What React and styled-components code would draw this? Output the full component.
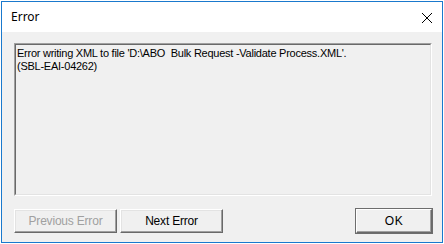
import React from "react";
import styled, { createGlobalStyle } from "styled-components";

const GlobalStyle = createGlobalStyle`
  html, body {
    margin: 0;
    padding: 0;
    background: #ffffff;
  }
  body {
    width: 444px;
    height: 244px;
    overflow: hidden;
  }
`;

const Desk = styled.div`
  padding: 1px 0 0 1px;
  width: 444px;
  height: 244px;
  box-sizing: border-box;
`;

const Window = styled.div`
  width: 442px;
  height: 242px;
  box-sizing: border-box;
  border: 1px solid #1a79cd;
  background: #f0f0f0;
  display: flex;
  flex-direction: column;
`;

const TitleBar = styled.div`
  height: 30px;
  background: #ffffff;
  display: flex;
  align-items: center;
  justify-content: space-between;
  padding: 0 9px 0 9px;
  font-family: "Noto Sans", "Liberation Sans", sans-serif;
  font-size: 12px;
  color: #000;
`;

const Title = styled.span`
  margin-top: -1px;
`;

const Close = styled.div`
  width: 12px;
  height: 12px;
  display: flex;
  margin-top: 1px;
`;

const Body = styled.div`
  flex: 1;
  display: flex;
  flex-direction: column;
  padding: 11px 10px 9px 12px;
`;

const MessageBox = styled.div`
  height: 153px;
  border-style: solid;
  border-width: 1px;
  border-color: #a0a0a0 #ffffff #ffffff #a0a0a0;
  box-sizing: border-box;
`;

const MessageInner = styled.div`
  height: 100%;
  box-sizing: border-box;
  border-style: solid;
  border-width: 1px;
  border-color: #696969 #e3e3e3 #e3e3e3 #696969;
  padding: 2px 0 0 1px;
  font-family: "Liberation Sans", Arial, sans-serif;
  font-size: 11px;
  line-height: 13px;
  letter-spacing: -0.25px;
  color: #000;
  white-space: pre;
`;

const ButtonRow = styled.div`
  display: flex;
  align-items: center;
  gap: 3px;
  margin-top: 13px;
`;

const Spacer = styled.div`
  flex: 1;
`;

const Button = styled.button`
  width: ${(p) => p.w}px;
  height: 24px;
  box-sizing: border-box;
  background: #f0f0f0;
  border-style: solid;
  border-width: 1px;
  border-color: #ffffff #696969 #696969 #ffffff;
  box-shadow: ${(p) =>
    p.isDefault
      ? "0 0 0 1px #6d6d6d, inset -1px -1px 0 #a0a0a0"
      : "inset -1px -1px 0 #a0a0a0, inset 1px 1px 0 #e3e3e3"};
  font-family: "Liberation Sans", Arial, sans-serif;
  font-size: 12px;
  letter-spacing: ${(p) => (p.isDefault ? "0.5px" : "-0.2px")};
  color: ${(p) => (p.disabled ? "#a0a0a0" : "#000")};
  padding: 0;
  margin: 0;
  cursor: default;
`;

const XIcon = () => (
  <svg width="12" height="12" viewBox="0 0 12 12">
    <path d="M1 1 L11 11 M11 1 L1 11" stroke="#000" strokeWidth="1" />
  </svg>
);

const App = () => (
  <>
    <GlobalStyle />
    <Desk>
      <Window>
        <TitleBar>
          <Title>Error</Title>
          <Close>
            <XIcon />
          </Close>
        </TitleBar>
        <Body>
          <MessageBox>
            <MessageInner>
              {"Error writing XML to file 'D:\\ABO  Bulk Request -Validate Process.XML'.\n(SBL-EAI-04262)"}
            </MessageInner>
          </MessageBox>
          <ButtonRow>
            <Button w={103} disabled>
              Previous Error
            </Button>
            <Button w={103}>Next Error</Button>
            <Spacer />
            <Button w={76} isDefault>
              OK
            </Button>
          </ButtonRow>
        </Body>
      </Window>
    </Desk>
  </>
);

export default App;
